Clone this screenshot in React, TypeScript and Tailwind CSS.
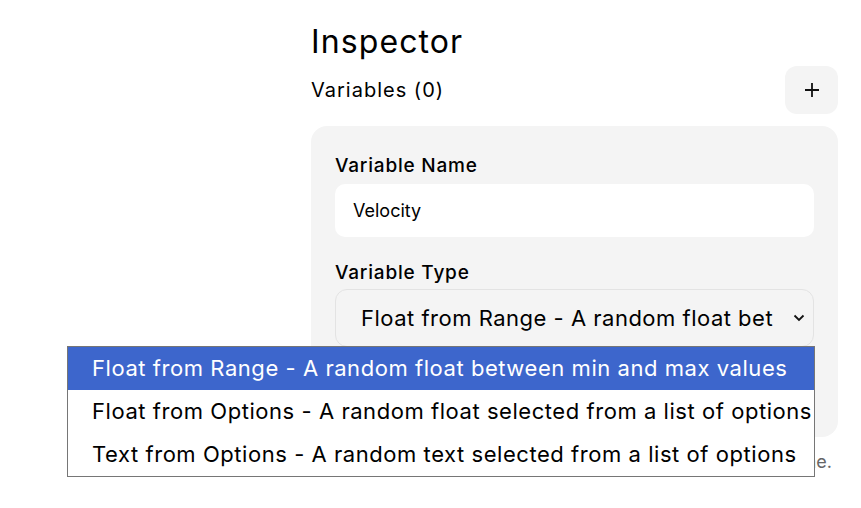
import React from "react";

const OPTIONS = [
  "Float from Range - A random float between min and max values",
  "Float from Options - A random float selected from a list of options",
  "Text from Options - A random text selected from a list of options",
];

const App: React.FC = () => {
  return (
    <div
      className="min-h-screen w-[861px] h-[508px] overflow-hidden bg-white text-black flex"
      style={{ fontFamily: "Inter, 'Liberation Sans', sans-serif" }}
    >
      <div className="flex-1" />

      {/* Inspector panel */}
      <div className="w-[527px] mr-[23px] pt-[22px]">
        <h1 className="text-[32px] leading-[40px] tracking-[1.1px]">Inspector</h1>

        <div className="flex items-center justify-between mt-[4px]">
          <h2 className="text-[20px] leading-[28px] tracking-[1px]">Variables (0)</h2>
          <button className="w-[53px] h-[48px] rounded-[12px] bg-[#f4f4f4] flex items-center justify-center">
            <svg width="18" height="18" viewBox="0 0 18 18" fill="none">
              <path d="M9 2v14M2 9h14" stroke="#111" strokeWidth="1.8" />
            </svg>
          </button>
        </div>

        {/* Variable card */}
        <div className="mt-[12px] bg-[#f4f4f4] rounded-[16px] px-[24px] pt-[28px] pb-[90px]">
          <label className="block text-[19px] leading-[24px] font-medium tracking-[0.8px]">
            Variable Name
          </label>
          <div className="mt-[6px] h-[53px] bg-white rounded-[10px] flex items-center px-[18px] text-[18px]">
            Velocity
          </div>

          <label className="block mt-[24px] text-[19px] leading-[24px] font-medium tracking-[0.8px]">
            Variable Type
          </label>
          <div className="relative mt-[4px]">
            <div className="h-[58px] border border-[#e3e3e3] rounded-[12px] flex items-center pl-[25px] pr-[8px] text-[22px] tracking-[0.5px]">
              <span className="flex-1 overflow-hidden whitespace-nowrap">
                Float from Range - A random float bet
              </span>
              <svg width="12" height="8" viewBox="0 0 12 8" fill="none" className="ml-[20px]">
                <path d="M1.5 1.5l4.5 4.5 4.5-4.5" stroke="#111" strokeWidth="1.8" />
              </svg>
            </div>

            {/* Open option list */}
            <div className="absolute -right-px top-[57px] z-10 border border-[#767676] bg-white whitespace-nowrap">
              {OPTIONS.map((opt, i) => (
                <div
                  key={opt}
                  className={
                    i === 0
                      ? "h-[43px] flex items-center pl-[24px] pr-[24px] text-[22px] tracking-[0.55px] bg-[#3d66cc] text-white"
                      : "h-[43px] flex items-center pl-[24px] pr-[2px] text-[22px] tracking-[0.55px]"
                  }
                >
                  {opt}
                </div>
              ))}
            </div>
          </div>
        </div>

        <p className="mt-[12px] text-[18px] leading-[26px] text-[#666] text-right pr-[6px]">
          Each variable must have a unique name.
        </p>
      </div>
    </div>
  );
};

export default App;
